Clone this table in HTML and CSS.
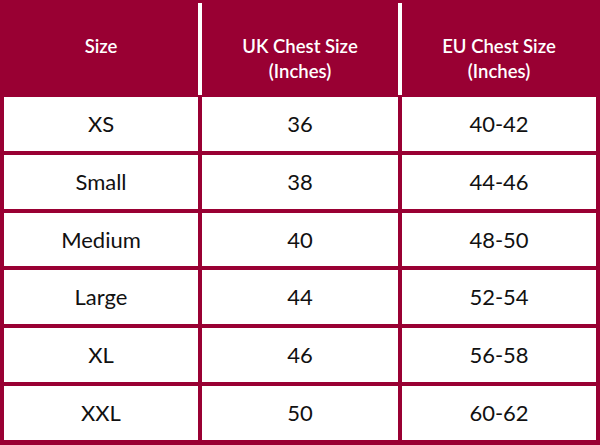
FILE: index.html
```html
<!DOCTYPE html>
<html>
<head>
<meta charset="utf-8">
<link rel="stylesheet" href="styles.css">
</head>
<body>
<div class="chart">
  <div class="head">
    <div class="hcell">Size</div>
    <div class="sep"></div>
    <div class="hcell">UK Chest Size<br>(Inches)</div>
    <div class="sep"></div>
    <div class="hcell">EU Chest Size<br>(Inches)</div>
  </div>
  <div class="body">
    <div class="cell">XS</div><div class="cell">36</div><div class="cell">40-42</div>
    <div class="cell">Small</div><div class="cell">38</div><div class="cell">44-46</div>
    <div class="cell">Medium</div><div class="cell">40</div><div class="cell">48-50</div>
    <div class="cell">Large</div><div class="cell">44</div><div class="cell">52-54</div>
    <div class="cell">XL</div><div class="cell">46</div><div class="cell">56-58</div>
    <div class="cell">XXL</div><div class="cell">50</div><div class="cell">60-62</div>
  </div>
</div>
</body>
</html>
```
FILE: styles.css
```css
html, body {
  margin: 0;
  padding: 0;
  background: #ffffff;
}
.chart {
  width: 600px;
  height: 445px;
  background: #990033;
  font-family: "Lato", "Open Sans", sans-serif;
  box-sizing: border-box;
  padding: 0 4px 5px 4px;
  display: flex;
  flex-direction: column;
}
.head {
  height: 97px;
  display: grid;
  grid-template-columns: 194px 4px 196px 4px 194px;
}
.hcell {
  color: #ffffff;
  font-size: 18.5px;
  font-weight: 600;
  line-height: 25px;
  text-align: center;
  padding-top: 34px;
}
.sep {
  background: #ffffff;
  margin: 3px 0 2px 0;
}
.body {
  flex: 1;
  display: grid;
  grid-template-columns: 194px 196px 194px;
  grid-template-rows: repeat(6, 1fr);
  gap: 4px;
}
.cell {
  background: #ffffff;
  color: #111111;
  font-size: 22px;
  display: flex;
  align-items: center;
  justify-content: center;
  padding-bottom: 1px;
}
```
